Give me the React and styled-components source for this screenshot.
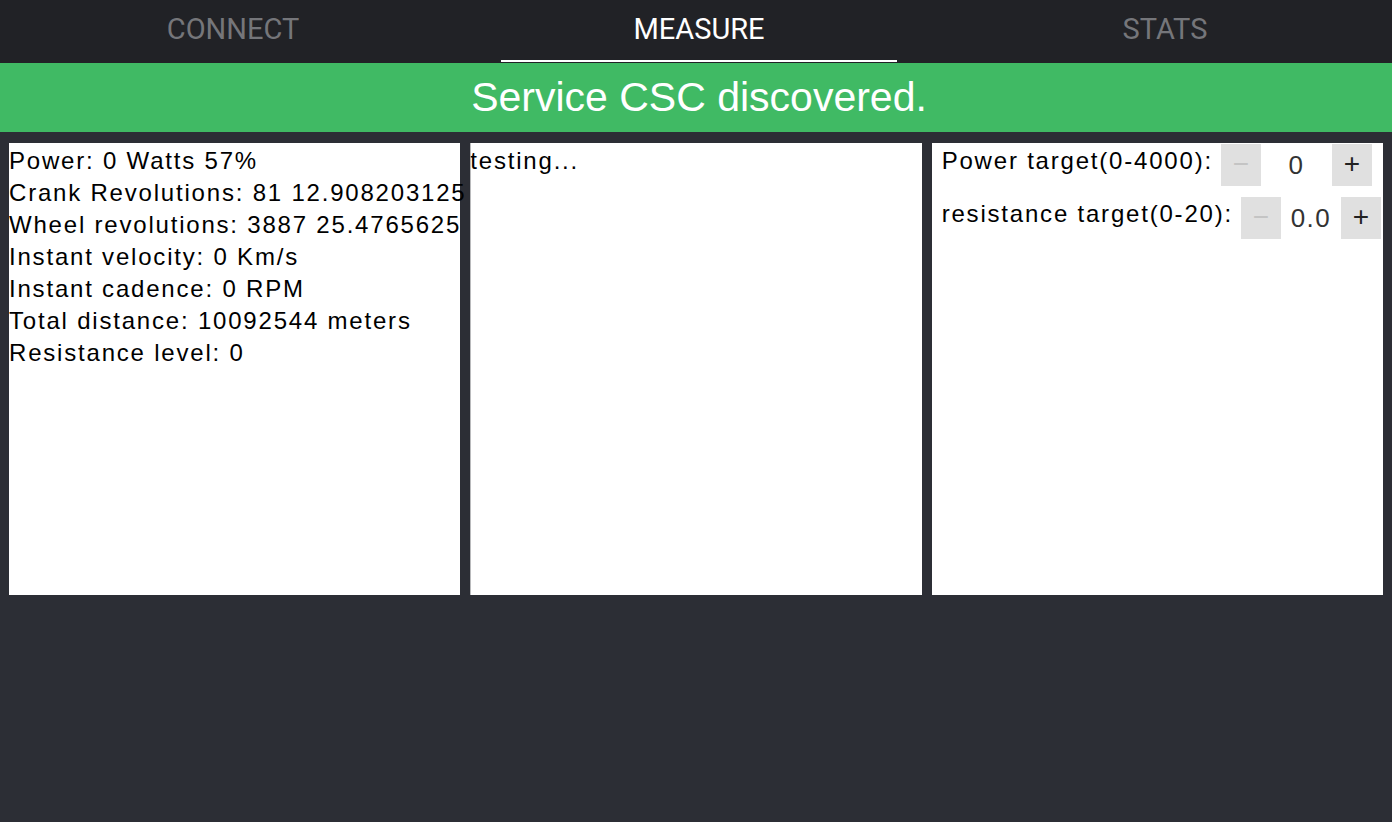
import React from "react";
import styled, { createGlobalStyle } from "styled-components";

const Global = createGlobalStyle`
  html, body { margin: 0; padding: 0; }
  body {
    background: #2c2e35;
    min-height: 100vh;
    font-family: "Liberation Sans", Arial, sans-serif;
    overflow: hidden;
  }
`;

const Page = styled.div`
  display: flex;
  flex-direction: column;
  width: 1392px;
  min-height: 822px;
  background: #2c2e35;
`;

const TabBar = styled.nav`
  display: grid;
  grid-template-columns: repeat(3, 466px);
  height: 63px;
  background: #212226;
  overflow: hidden;
`;

const Tab = styled.div`
  position: relative;
  display: flex;
  align-items: center;
  justify-content: center;
  padding-bottom: 5px;
  box-sizing: border-box;
  font-family: Roboto, "Liberation Sans", sans-serif;
  font-size: 29px;
  text-transform: uppercase;
  color: ${(p) => (p.$active ? "#ffffff" : "#75767a")};
  cursor: pointer;

  &::after {
    content: "";
    display: ${(p) => (p.$active ? "block" : "none")};
    position: absolute;
    left: 35px;
    right: 35px;
    bottom: 1px;
    height: 2px;
    background: #ffffff;
  }
`;

const Banner = styled.div`
  display: flex;
  align-items: center;
  justify-content: center;
  height: 69px;
  padding-left: 6px;
  background: #40ba64;
  color: #ffffff;
  font-size: 41px;
`;

const Panels = styled.main`
  display: grid;
  grid-template-columns: repeat(3, minmax(0, 1fr));
  gap: 10px;
  padding: 11px 9px 0;
`;

const Card = styled.section`
  min-width: 0;
  height: 452px;
  box-sizing: border-box;
  background: #ffffff;
  color: #000000;
  font-size: 24px;
  line-height: 32px;
  letter-spacing: 1.8px;
  padding: ${(p) => p.$pad || "0"};
  clip-path: inset(0 -7px 0 0);
`;

const Line = styled.div`
  white-space: nowrap;
`;

const ControlRow = styled.div`
  display: flex;
  align-items: flex-start;
  gap: 8px;
  margin-bottom: 11px;
`;

const Label = styled.label`
  white-space: nowrap;
  padding-top: 1px;
`;

const Stepper = styled.div`
  display: flex;
  height: 42px;
  background: #e0e0e0;
`;

const StepButton = styled.button`
  width: 40px;
  height: 42px;
  border: none;
  margin: 0;
  padding: 0 0 2px;
  background: #e0e0e0;
  font-family: "Liberation Sans", Arial, sans-serif;
  font-size: 28px;
  line-height: 1;
  color: ${(p) => (p.$disabled ? "#c4c4c4" : "#222222")};
  display: flex;
  align-items: center;
  justify-content: center;
  cursor: pointer;
`;

const StepValue = styled.div`
  width: ${(p) => p.$w}px;
  height: 42px;
  background: #ffffff;
  display: flex;
  align-items: center;
  justify-content: center;
  font-size: 26px;
  letter-spacing: 1.5px;
  color: #333333;
`;

const stats = [
  "Power: 0 Watts 57%",
  "Crank Revolutions: 81 12.908203125",
  "Wheel revolutions: 3887 25.4765625",
  "Instant velocity: 0 Km/s",
  "Instant cadence: 0 RPM",
  "Total distance: 10092544 meters",
  "Resistance level: 0",
];

function Control({ label, value, width }) {
  return (
    <ControlRow>
      <Label>{label}</Label>
      <Stepper>
        <StepButton $disabled>−</StepButton>
        <StepValue $w={width}>{value}</StepValue>
        <StepButton>+</StepButton>
      </Stepper>
    </ControlRow>
  );
}

export default function App() {
  return (
    <>
      <Global />
      <Page>
        <TabBar>
          <Tab>Connect</Tab>
          <Tab $active>Measure</Tab>
          <Tab>Stats</Tab>
        </TabBar>
        <Banner>Service CSC discovered.</Banner>
        <Panels>
          <Card $pad="2px 0 0 0">
            {stats.map((s) => (
              <Line key={s}>{s}</Line>
            ))}
          </Card>
          <Card $pad="2px 0 0 0">
            <Line>testing...</Line>
          </Card>
          <Card $pad="1px 0 0 10px">
            <Control label="Power target(0-4000):" value="0" width={71} />
            <Control label="resistance target(0-20):" value="0.0" width={60} />
          </Card>
        </Panels>
      </Page>
    </>
  );
}
